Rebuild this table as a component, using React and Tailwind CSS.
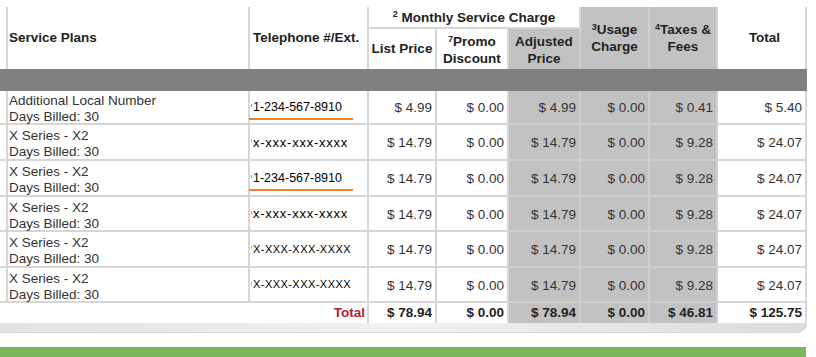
import React from 'react';

// Filas del detalle de planes
const rows = [
  { plan: 'Additional Local Number', phone: '1-234-567-8910', kind: 'num', list: '$ 4.99', promo: '$ 0.00', adj: '$ 4.99', usage: '$ 0.00', tax: '$ 0.41', total: '$ 5.40' },
  { plan: 'X Series - X2', phone: 'x-xxx-xxx-xxxx', kind: 'lower', list: '$ 14.79', promo: '$ 0.00', adj: '$ 14.79', usage: '$ 0.00', tax: '$ 9.28', total: '$ 24.07' },
  { plan: 'X Series - X2', phone: '1-234-567-8910', kind: 'num', list: '$ 14.79', promo: '$ 0.00', adj: '$ 14.79', usage: '$ 0.00', tax: '$ 9.28', total: '$ 24.07' },
  { plan: 'X Series - X2', phone: 'x-xxx-xxx-xxxx', kind: 'lower', list: '$ 14.79', promo: '$ 0.00', adj: '$ 14.79', usage: '$ 0.00', tax: '$ 9.28', total: '$ 24.07' },
  { plan: 'X Series - X2', phone: 'X-XXX-XXX-XXXX', kind: 'upper', list: '$ 14.79', promo: '$ 0.00', adj: '$ 14.79', usage: '$ 0.00', tax: '$ 9.28', total: '$ 24.07' },
  { plan: 'X Series - X2', phone: 'X-XXX-XXX-XXXX', kind: 'upper', list: '$ 14.79', promo: '$ 0.00', adj: '$ 14.79', usage: '$ 0.00', tax: '$ 9.28', total: '$ 24.07' },
];

const cell = 'border-r-2 border-[#d6d6d6]';
const dataCell = 'border-r-2 border-b-2 border-[#d6d6d6] flex items-center';
const numCell = 'border-r-2 border-b-2 border-[#d6d6d6] flex items-center justify-end pr-[3px] pt-[3px]';
const grayNum = 'border-r-2 border-b-2 border-[#cfcfcf] bg-[#c2c2c2] flex items-center justify-end pr-[3px] pt-[3px]';

const Phone = ({ phone, kind }) => {
  if (kind === 'num') {
    return (
      <span className="relative flex items-center leading-[15px]">
        <span className="w-px h-[3px] bg-[#9a9a9a] mr-px -mt-[3px]"></span>
        <span className="text-[12.5px] text-black">{phone}</span>
        <span className="absolute left-[-2px] top-[18px] w-[104px] h-[2px] bg-[#f47f2b]"></span>
      </span>
    );
  }
  return (
    <span className="flex items-center leading-[15px]">
      <span className="w-px h-[3px] bg-[#b0b0b0] mr-px -mt-[3px]"></span>
      {kind === 'lower' ? (
        <span className="text-[13px] tracking-[0.75px] text-black">{phone}</span>
      ) : (
        <span className="text-[11px] tracking-[0.45px] text-black">{phone}</span>
      )}
    </span>
  );
};

export default function App() {
  return (
    <div className="w-[816px] h-[357px] bg-white overflow-hidden font-['Liberation_Sans',Arial,sans-serif] text-[#333]">
      <div className="pt-[7px]">
        <div className="grid grid-cols-[8px_242px_119px_68px_72px_72px_69px_68px_89px] grid-rows-[22px_40px_22px_34px_36px_36px_35px_36px_35px_20px] text-[13.5px]">
          {/* Encabezado fila 1 */}
          <div className={`${cell} row-span-2`}></div>
          <div className={`${cell} row-span-2 flex items-center pl-px font-bold text-[#222]`}>Service Plans</div>
          <div className={`${cell} row-span-2 flex items-center pl-[3px] font-bold text-[#222]`}>Telephone #/Ext.</div>
          <div className="col-span-3 border-r-2 border-b-2 border-[#d6d6d6] flex items-center justify-center pt-[3px] font-bold text-[#222]">
            <sup className="text-[9px]">2</sup>&nbsp;Monthly Service Charge
          </div>
          <div className="row-span-2 border-r-2 border-[#cfcfcf] bg-[#c2c2c2] flex items-center justify-center text-center font-bold text-[#222] leading-[17px]">
            <div>
              <sup className="text-[9px]">3</sup>Usage
              <br />
              Charge
            </div>
          </div>
          <div className="row-span-2 border-r-2 border-[#cfcfcf] bg-[#c2c2c2] flex items-center justify-center text-center font-bold text-[#222] leading-[17px]">
            <div>
              <sup className="text-[9px]">4</sup>Taxes &amp;
              <br />
              Fees
            </div>
          </div>
          <div className={`${cell} row-span-2 flex items-center justify-center pl-[6px] font-bold text-[#222]`}>Total</div>

          {/* Encabezado fila 2 */}
          <div className={`${cell} flex items-center justify-center font-bold text-[#222]`}>List Price</div>
          <div className={`${cell} flex items-center justify-center text-center font-bold text-[#222] leading-[17px] pt-[2px]`}>
            <div>
              <sup className="text-[9px]">7</sup>Promo
              <br />
              Discount
            </div>
          </div>
          <div className="border-r-2 border-[#cfcfcf] bg-[#c2c2c2] flex items-center justify-center text-center font-bold text-[#222] leading-[17px] pt-[2px]">
            <div>
              Adjusted
              <br />
              Price
            </div>
          </div>

          {/* Banda gris */}
          <div className="col-span-9 bg-[#808080]"></div>

          {/* Filas de datos */}
          {rows.map((r, i) => (
            <React.Fragment key={i}>
              <div className={dataCell}></div>
              <div className={`${dataCell} pl-px pt-[4px] leading-[16px]`}>
                <div>
                  {r.plan}
                  <br />
                  Days Billed: 30
                </div>
              </div>
              <div className={`${dataCell} pl-px`}>
                <Phone phone={r.phone} kind={r.kind} />
              </div>
              <div className={numCell}>{r.list}</div>
              <div className={numCell}>{r.promo}</div>
              <div className={grayNum}>{r.adj}</div>
              <div className={grayNum}>{r.usage}</div>
              <div className={grayNum}>{r.tax}</div>
              <div className={numCell}>{r.total}</div>
            </React.Fragment>
          ))}

          {/* Fila de total */}
          <div className="col-span-3 border-r-2 border-[#d6d6d6] flex items-center justify-end pr-[2px] pt-[1px] font-bold text-[#b0213b]">Total</div>
          <div className="border-r-2 border-[#d6d6d6] flex items-center justify-end pr-[3px] pt-[1px] font-bold text-[#222]">$ 78.94</div>
          <div className="border-r-2 border-[#d6d6d6] flex items-center justify-end pr-[3px] pt-[1px] font-bold text-[#222]">$ 0.00</div>
          <div className="border-r-2 border-[#cfcfcf] bg-[#c2c2c2] flex items-center justify-end pr-[3px] pt-[1px] font-bold text-[#222]">$ 78.94</div>
          <div className="border-r-2 border-[#cfcfcf] bg-[#c2c2c2] flex items-center justify-end pr-[3px] pt-[1px] font-bold text-[#222]">$ 0.00</div>
          <div className="border-r-2 border-[#cfcfcf] bg-[#c2c2c2] flex items-center justify-end pr-[3px] pt-[1px] font-bold text-[#222]">$ 46.81</div>
          <div className="border-r-2 border-[#d6d6d6] flex items-center justify-end pr-[3px] pt-[1px] font-bold text-[#222]">$ 125.75</div>
        </div>

        {/* Pie redondeado */}
        <div className="w-[807px] h-[10px] bg-linear-to-r from-[#e3e3e3] via-[#f1f1f1] to-[#dcdcdc] border-b border-r-2 border-[#d2d2d2] rounded-br-[10px]"></div>
      </div>

      <div className="mt-[14px] w-[806px] h-[12px] bg-[#7db75b]"></div>
    </div>
  );
}
